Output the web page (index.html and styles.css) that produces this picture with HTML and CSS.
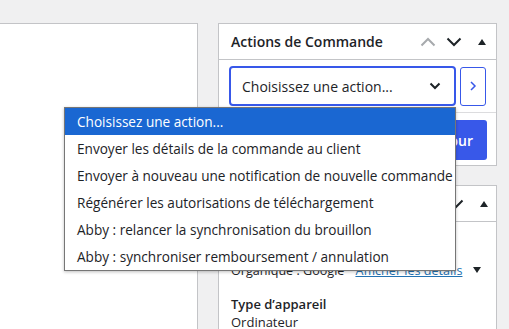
FILE: index.html
```html
<!DOCTYPE html>
<html lang="fr">
<head>
  <meta charset="UTF-8">
  <title>Modifier la commande</title>
  <link rel="stylesheet" href="styles.css">
</head>
<body>
  <div class="wrap">
    <div class="main-box"></div>

    <div class="sidebar">
      <div class="postbox">
        <div class="postbox-header">
          <h2>Actions de Commande</h2>
          <div class="handles">
            <svg class="handle faded" width="16" height="10" viewBox="0 0 16 10"><path d="M1.5 8.5 8 2l6.5 6.5" fill="none" stroke="currentColor" stroke-width="2"/></svg>
            <svg class="handle" width="16" height="10" viewBox="0 0 16 10"><path d="M1.5 1.5 8 8l6.5-6.5" fill="none" stroke="currentColor" stroke-width="2"/></svg>
            <svg class="toggle" width="8" height="6" viewBox="0 0 8 6"><path d="M0 6 4 0l4 6z" fill="currentColor"/></svg>
          </div>
        </div>
        <div class="postbox-inside">
          <div class="action-row">
            <div class="select-box">
              <span>Choisissez une action...</span>
              <svg width="12" height="8" viewBox="0 0 12 8"><path d="M1.5 1.5 6 6l4.5-4.5" fill="none" stroke="#1d2327" stroke-width="2"/></svg>
            </div>
            <button class="go-btn">
              <svg width="8" height="12" viewBox="0 0 8 12"><path d="M2 2l4 4-4 4" fill="none" stroke="#3858e9" stroke-width="1.5"/></svg>
            </button>
          </div>
        </div>
        <div class="publish-actions">
          <button class="save-btn">Mettre à jour</button>
        </div>
      </div>

      <div class="postbox">
        <div class="postbox-header">
          <h2>Attribution de la commande</h2>
          <div class="handles">
            <svg class="handle faded" width="16" height="10" viewBox="0 0 16 10"><path d="M1.5 8.5 8 2l6.5 6.5" fill="none" stroke="currentColor" stroke-width="2"/></svg>
            <svg class="handle" width="16" height="10" viewBox="0 0 16 10"><path d="M1.5 1.5 8 8l6.5-6.5" fill="none" stroke="currentColor" stroke-width="2"/></svg>
            <svg class="toggle" width="8" height="6" viewBox="0 0 8 6"><path d="M0 6 4 0l4 6z" fill="currentColor"/></svg>
          </div>
        </div>
        <div class="postbox-inside attribution">
          <div class="origin-row">
            <span>Organique : Google</span>
            <a href="#">Afficher les détails</a>
            <svg class="toggle" width="8" height="6" viewBox="0 0 8 6"><path d="M0 0h8L4 6z" fill="currentColor"/></svg>
          </div>
          <h4>Type d’appareil</h4>
          <p>Ordinateur</p>
        </div>
      </div>
    </div>
  </div>

  <ul class="dropdown">
    <li class="selected">Choisissez une action...</li>
    <li>Envoyer les détails de la commande au client</li>
    <li>Envoyer à nouveau une notification de nouvelle commande</li>
    <li>Régénérer les autorisations de téléchargement</li>
    <li>Abby : relancer la synchronisation du brouillon</li>
    <li>Abby : synchroniser remboursement / annulation</li>
  </ul>
</body>
</html>
```

FILE: styles.css
```css
body {
  margin: 0;
  background: #f0f0f1;
  font-family: "Segoe UI", "Open Sans", Arial, sans-serif;
  color: #1d2327;
  font-size: 13px;
  overflow: hidden;
}
.wrap {
  display: flex;
  gap: 20px;
  padding-top: 23px;
  margin-left: -1px;
}
.main-box {
  width: 197px;
  height: 400px;
  background: #fff;
  border: 1px solid #c3c4c7;
}
.sidebar {
  width: 279px;
  display: flex;
  flex-direction: column;
  gap: 19px;
}
.postbox {
  background: #fff;
  border: 1px solid #c3c4c7;
}
.postbox-header {
  height: 35px;
  display: flex;
  align-items: center;
  justify-content: space-between;
  border-bottom: 1px solid #c3c4c7;
  padding: 0 10px 0 12px;
}
.postbox-header h2 {
  margin: 0;
  font-size: 14px;
  font-weight: 600;
  white-space: nowrap;
}
.handles {
  display: flex;
  align-items: center;
  gap: 10px;
  color: #1d2327;
}
.handle.faded {
  color: #a7aaad;
}
.toggle {
  color: #1d2327;
  margin-left: 6px;
}
.postbox-inside {
  padding: 6px 10px;
}
.action-row {
  display: flex;
  align-items: center;
  gap: 4px;
}
.select-box {
  box-sizing: border-box;
  width: 227px;
  height: 40px;
  border: 2px solid #3858e9;
  border-radius: 4px;
  display: flex;
  align-items: center;
  justify-content: space-between;
  padding: 0 13px 0 11px;
  font-size: 14px;
}
.go-btn {
  width: 26px;
  height: 39px;
  border: 1px solid #3858e9;
  border-radius: 3px;
  background: #fff;
  display: flex;
  align-items: center;
  justify-content: center;
  padding: 0;
}
.publish-actions {
  border-top: 1px solid #dcdcde;
  padding: 7px 9px 5px;
  display: flex;
  justify-content: flex-end;
}
.save-btn {
  height: 40px;
  padding: 0 14px;
  background: #3858e9;
  color: #fff;
  border: none;
  border-radius: 3px;
  font-family: inherit;
  font-size: 14px;
  font-weight: 600;
}
.attribution {
  padding: 38px 12px 12px;
}
.origin-row {
  display: flex;
  align-items: center;
  gap: 11px;
  height: 20px;
  font-size: 12.6px;
  white-space: nowrap;
}
.origin-row a {
  color: #2271b1;
}
.origin-row .toggle {
  margin-left: auto;
  margin-right: 4px;
  flex-shrink: 0;
}
.attribution h4 {
  margin: 15px 0 0;
  font-size: 13px;
  font-weight: 600;
  line-height: 18px;
}
.attribution p {
  margin: 0;
  font-size: 13px;
  line-height: 18px;
}
.dropdown {
  position: absolute;
  left: 64px;
  top: 107px;
  width: 390px;
  margin: 0;
  padding: 0;
  list-style: none;
  background: #fff;
  border: 1px solid #767676;
  box-shadow: 0 1px 3px rgba(0, 0, 0, 0.25);
  font-size: 13.6px;
  color: #1d2327;
}
.dropdown li {
  height: 27px;
  line-height: 27px;
  padding-left: 12px;
  white-space: nowrap;
}
.dropdown li.selected {
  background: #1a67d2;
  color: #fff;
}
```
